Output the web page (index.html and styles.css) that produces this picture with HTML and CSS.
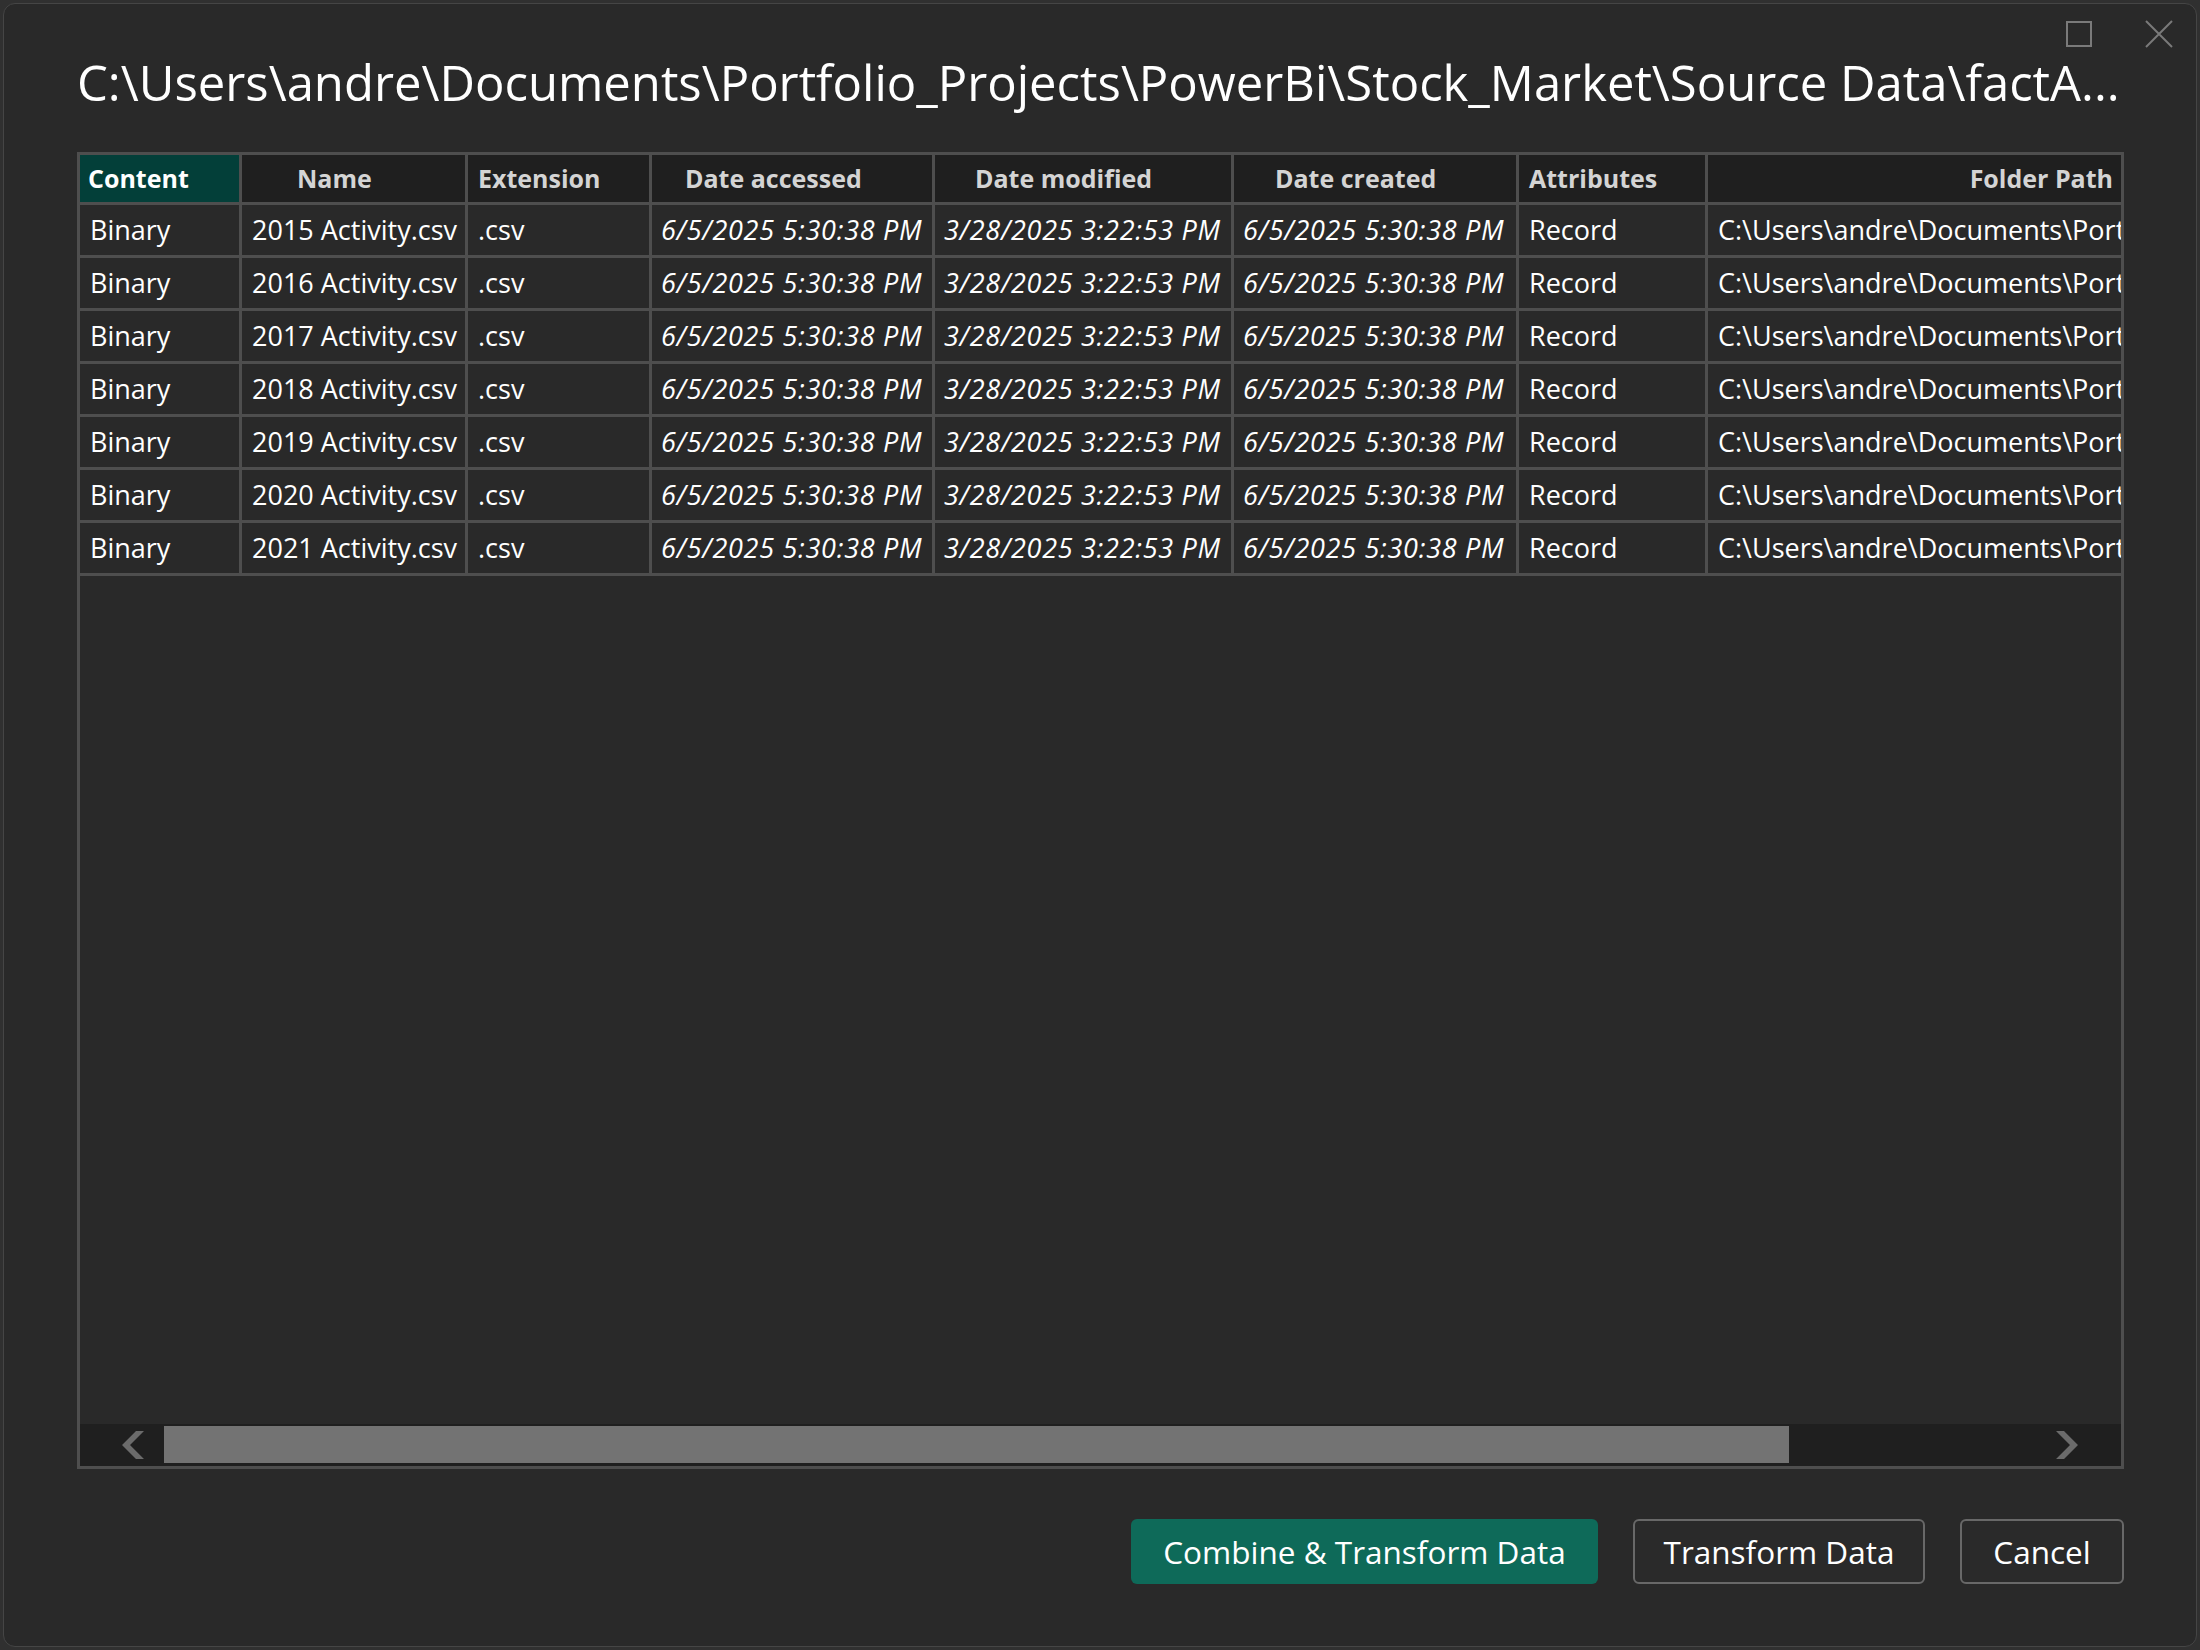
FILE: index.html
```html
<!DOCTYPE html>
<html lang="en">
<head>
<meta charset="utf-8">
<title>Navigator</title>
<link rel="stylesheet" href="styles.css">
</head>
<body>
<div class="dialog">
  <div class="chrome">
    <svg class="ic-max" width="26" height="26" viewBox="0 0 26 26"><rect x="1" y="1" width="24" height="24" fill="none" stroke="#7a7a7a" stroke-width="2"/></svg>
    <svg class="ic-close" width="28" height="28" viewBox="0 0 28 28"><path d="M1 1 L27 27 M27 1 L1 27" stroke="#7a7a7a" stroke-width="2" fill="none"/></svg>
  </div>
  <div class="content">
    <h1 class="title">C:\Users\andre\Documents\Portfolio_Projects\PowerBi\Stock_Market\Source Data\factA...</h1>
    <div class="table">
      <div class="grid">
        <div class="th th-active">Content</div>
        <div class="th th-name">Name</div>
        <div class="th">Extension</div>
        <div class="th th-da">Date accessed</div>
        <div class="th th-dm">Date modified</div>
        <div class="th th-dc">Date created</div>
        <div class="th">Attributes</div>
        <div class="th th-right">Folder Path</div>

        <div class="td">Binary</div><div class="td">2015 Activity.csv</div><div class="td">.csv</div><div class="td it">6/5/2025 5:30:38 PM</div><div class="td it">3/28/2025 3:22:53 PM</div><div class="td it">6/5/2025 5:30:38 PM</div><div class="td">Record</div><div class="td">C:\Users\andre\Documents\Portfolio_Projects\PowerBi\Stock_Market\Source Data\factActivity\</div>
        <div class="td">Binary</div><div class="td">2016 Activity.csv</div><div class="td">.csv</div><div class="td it">6/5/2025 5:30:38 PM</div><div class="td it">3/28/2025 3:22:53 PM</div><div class="td it">6/5/2025 5:30:38 PM</div><div class="td">Record</div><div class="td">C:\Users\andre\Documents\Portfolio_Projects\PowerBi\Stock_Market\Source Data\factActivity\</div>
        <div class="td">Binary</div><div class="td">2017 Activity.csv</div><div class="td">.csv</div><div class="td it">6/5/2025 5:30:38 PM</div><div class="td it">3/28/2025 3:22:53 PM</div><div class="td it">6/5/2025 5:30:38 PM</div><div class="td">Record</div><div class="td">C:\Users\andre\Documents\Portfolio_Projects\PowerBi\Stock_Market\Source Data\factActivity\</div>
        <div class="td">Binary</div><div class="td">2018 Activity.csv</div><div class="td">.csv</div><div class="td it">6/5/2025 5:30:38 PM</div><div class="td it">3/28/2025 3:22:53 PM</div><div class="td it">6/5/2025 5:30:38 PM</div><div class="td">Record</div><div class="td">C:\Users\andre\Documents\Portfolio_Projects\PowerBi\Stock_Market\Source Data\factActivity\</div>
        <div class="td">Binary</div><div class="td">2019 Activity.csv</div><div class="td">.csv</div><div class="td it">6/5/2025 5:30:38 PM</div><div class="td it">3/28/2025 3:22:53 PM</div><div class="td it">6/5/2025 5:30:38 PM</div><div class="td">Record</div><div class="td">C:\Users\andre\Documents\Portfolio_Projects\PowerBi\Stock_Market\Source Data\factActivity\</div>
        <div class="td">Binary</div><div class="td">2020 Activity.csv</div><div class="td">.csv</div><div class="td it">6/5/2025 5:30:38 PM</div><div class="td it">3/28/2025 3:22:53 PM</div><div class="td it">6/5/2025 5:30:38 PM</div><div class="td">Record</div><div class="td">C:\Users\andre\Documents\Portfolio_Projects\PowerBi\Stock_Market\Source Data\factActivity\</div>
        <div class="td">Binary</div><div class="td">2021 Activity.csv</div><div class="td">.csv</div><div class="td it">6/5/2025 5:30:38 PM</div><div class="td it">3/28/2025 3:22:53 PM</div><div class="td it">6/5/2025 5:30:38 PM</div><div class="td">Record</div><div class="td">C:\Users\andre\Documents\Portfolio_Projects\PowerBi\Stock_Market\Source Data\factActivity\</div>
      </div>
      <div class="empty"></div>
      <div class="scrollbar">
        <div class="sb-btn sb-left">
          <svg width="23" height="28" viewBox="0 0 23 28"><polygon points="15,0 23,0 9,14 23,28 15,28 1,14" fill="#6b6b6b"/></svg>
        </div>
        <div class="sb-track"><div class="sb-thumb"></div></div>
        <div class="sb-btn sb-right">
          <svg width="23" height="28" viewBox="0 0 23 28"><polygon points="0,0 8,0 22,14 8,28 0,28 14,14" fill="#6b6b6b"/></svg>
        </div>
      </div>
    </div>
    <div class="actions">
      <button class="btn btn-primary">Combine &amp; Transform Data</button>
      <button class="btn btn-outline btn-transform">Transform Data</button>
      <button class="btn btn-outline btn-cancel">Cancel</button>
    </div>
  </div>
</div>
</body>
</html>
```

FILE: styles.css
```css
* { box-sizing: border-box; }

html, body {
  margin: 0;
  padding: 0;
}

body {
  background: #303030;
  width: 2200px;
  height: 1650px;
  padding: 3px;
  font-family: "Open Sans", "Noto Sans", sans-serif;
  color: #ffffff;
}

.dialog {
  width: 2194px;
  height: 1644px;
  background: #292929;
  border: 1px solid #454545;
  border-radius: 12px;
  display: flex;
  flex-direction: column;
}

.chrome {
  display: flex;
  justify-content: flex-end;
  align-items: center;
  gap: 53px;
  padding: 16px 23px 0 0;
  height: 44px;
}

.ic-max, .ic-close { display: block; }

.content {
  padding: 0 72px 0 73px;
  display: flex;
  flex-direction: column;
}

.title {
  margin: 4px 0 0 0;
  font-size: 49px;
  font-weight: 400;
  line-height: 60px;
  white-space: nowrap;
  color: #ffffff;
}

.table {
  margin-top: 40px;
  height: 1317px;
  border: 3px solid #4e4e4e;
  background: #292929;
  display: flex;
  flex-direction: column;
}

.grid {
  display: grid;
  grid-template-columns: 159px 223px 181px 280px 296px 282px 186px 413px;
  grid-template-rows: 47px repeat(7, 50px);
  gap: 3px;
  background: #4e4e4e;
  border-bottom: 3px solid #4e4e4e;
}

.th {
  background: #1f1f1f;
  color: #d4d4d4;
  font-size: 25px;
  font-weight: 700;
  line-height: 47px;
  padding-left: 10px;
  white-space: nowrap;
  overflow: hidden;
}

.th-active {
  background: #033f39;
  color: #ffffff;
  padding-left: 8px;
}

.th-name { padding-left: 55px; }
.th-da { padding-left: 33px; }
.th-dm { padding-left: 40px; }
.th-dc { padding-left: 41px; }
.th-right { text-align: right; padding-left: 0; padding-right: 8px; }

.td {
  background: #292929;
  font-size: 27px;
  line-height: 50px;
  padding-left: 10px;
  white-space: nowrap;
  overflow: hidden;
  color: #ffffff;
}

.td.it { font-style: italic; padding-left: 9px; letter-spacing: 0.7px; }

.empty { flex: 1; }

.scrollbar {
  height: 42px;
  background: #1f1f1f;
  display: flex;
}

.sb-btn {
  width: 84px;
  display: flex;
  align-items: center;
}

.sb-btn svg { display: block; }
.sb-left { padding-left: 41px; }
.sb-right { padding-left: 19px; }

.sb-track {
  flex: 1;
  padding: 2px 0 3px 0;
}

.sb-thumb {
  width: 1625px;
  height: 37px;
  background: #737373;
}

.actions {
  margin-top: 50px;
  display: flex;
  justify-content: flex-end;
  gap: 35px;
}

.btn {
  height: 65px;
  font-family: "Open Sans", "Noto Sans", sans-serif;
  font-size: 31.5px;
  color: #ffffff;
  border-radius: 6px;
  padding: 0;
  text-align: center;
  line-height: 1;
}

.btn-primary {
  width: 467px;
  background: #0e6a59;
  border: none;
}

.btn-outline {
  background: #2a2a2a;
  border: 2px solid #686868;
}

.btn-transform { width: 292px; }
.btn-cancel { width: 164px; }
```
